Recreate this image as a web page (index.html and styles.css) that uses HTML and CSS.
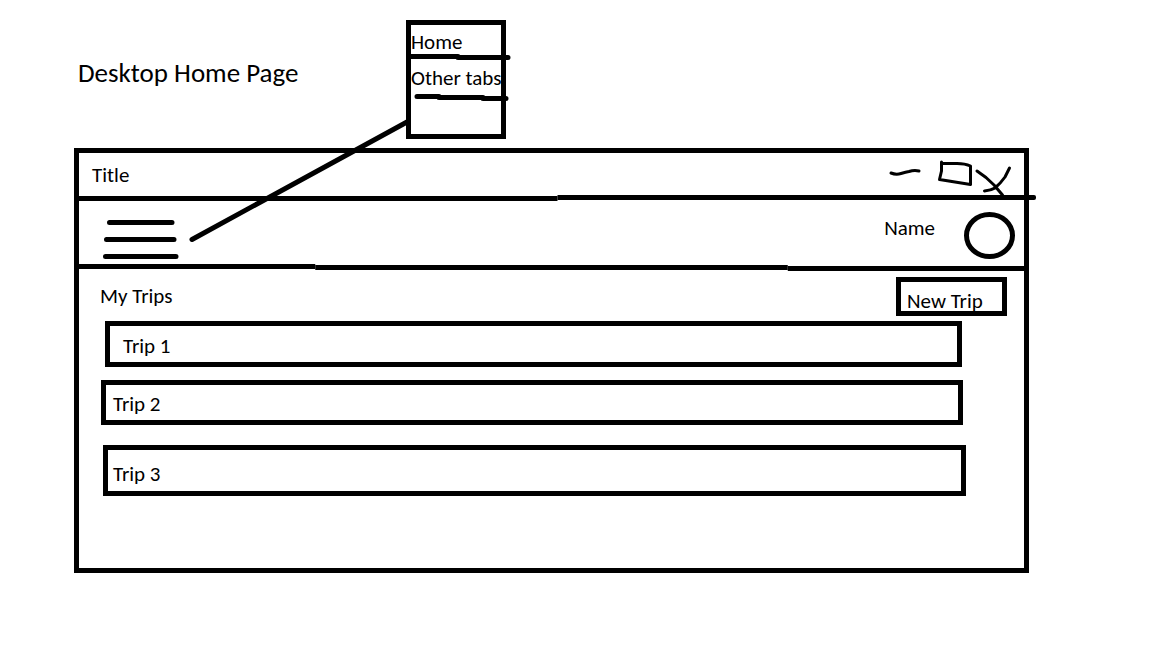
FILE: index.html
```html
<!DOCTYPE html>
<html lang="en">
<head>
<meta charset="utf-8">
<meta name="viewport" content="width=device-width, initial-scale=1">
<title>Desktop Home Page</title>
<link rel="stylesheet" href="styles.css">
</head>
<body>
<div class="page">
  <header class="page-header">
    <h1 class="page-title">Desktop Home Page</h1>
    <nav class="tab-menu" aria-label="Tabs">
      <a class="tab-link" href="#home">Home</a>
      <svg class="tab-rule" width="104" height="6" aria-hidden="true"><path d="M2 2.500H50M50 3.500H100"/></svg>
      <a class="tab-link tab-link-second" href="#tabs">Other tabs</a>
      <svg class="tab-rule tab-rule-last" width="96" height="8" aria-hidden="true"><path d="M3 2.500H25M25 3.500H69M69 4.500H92"/></svg>
      <svg class="connector" width="221" height="124" aria-hidden="true"><path d="M3 120.500 218 3"/></svg>
    </nav>
  </header>

  <div class="window">
    <div class="title-bar">
      <span class="window-title">Title</span>
      <div class="window-controls">
        <button class="icon-button" type="button" aria-label="Minimize">
          <svg width="48" height="42"><path d="M2 20Q7 22 12 20.500T20 18.500Q25 17 30 18"/></svg>
        </button>
        <button class="icon-button" type="button" aria-label="Maximize">
          <svg width="37" height="42"><path d="M4.500 9V18L2.500 26.500L18 29L33.500 31.500V13Q28 10.500 20 10.500H5"/></svg>
        </button>
        <button class="icon-button" type="button" aria-label="Close">
          <svg width="38" height="42"><path d="M3 18 12 24.500 20 32 28.500 42M35.500 15 31 24Q26 31 21 35Q17 37.500 10.500 38"/></svg>
        </button>
      </div>
    </div>
    <svg class="rule rule-title" aria-hidden="true">
      <rect x="0" y="1" width="50%" height="5"/>
      <rect x="50%" y="0" width="49%" height="5"/>
      <rect x="60%" y="0" width="40%" height="5" rx="2"/>
    </svg>

    <div class="toolbar">
      <button class="icon-button menu-button" type="button" aria-label="Menu">
        <svg width="76" height="41"><path d="M6.500 3.500H69M3.500 20.500H71M2.500 37.500H73"/></svg>
      </button>
      <div class="user">
        <span class="user-name">Name</span>
        <svg class="avatar" width="51" height="48" role="img" aria-label="Profile"><ellipse cx="25.500" cy="23.500" rx="23" ry="21"/></svg>
      </div>
    </div>
    <svg class="rule rule-toolbar" aria-hidden="true">
      <rect x="0" y="0" width="25%" height="5"/>
      <rect x="25%" y="1" width="50%" height="5"/>
      <rect x="75%" y="2" width="25%" height="5"/>
    </svg>

    <main class="content">
      <div class="content-header">
        <h2 class="content-title">My Trips</h2>
        <button class="new-trip" type="button">New Trip</button>
      </div>
      <ul class="trips">
        <li class="trip trip-first"><a class="trip-link" href="#trip-1">Trip 1</a></li>
        <li class="trip trip-second"><a class="trip-link" href="#trip-2">Trip 2</a></li>
        <li class="trip trip-third"><a class="trip-link" href="#trip-3">Trip 3</a></li>
      </ul>
    </main>
  </div>
</div>
</body>
</html>
```

FILE: styles.css
```css
* {
  box-sizing: border-box;
}

body {
  margin: 0;
  background: #fff;
  color: #000;
  font: 21px/24px Calibri, Carlito, Lato, sans-serif;
}

a {
  color: inherit;
  text-decoration: none;
}

button {
  font: inherit;
  color: inherit;
}

svg {
  display: block;
  overflow: visible;
}

path,
ellipse {
  fill: none;
  stroke: #000;
  stroke-width: 5px;
  stroke-linecap: round;
  stroke-linejoin: round;
}

.page {
  padding: 20px 123px 20px 74px;
}

.page-header {
  display: grid;
  grid-template-columns: 328px 100px;
  align-items: start;
  margin-left: 4px;
}

.page-title {
  margin: 37px 0 0;
  font-size: 27px;
  line-height: 32px;
  font-weight: 400;
  white-space: nowrap;
}

.tab-menu {
  position: relative;
  min-height: 119px;
  padding-top: 5px;
  border: 5px solid #000;
}

.tab-link {
  display: block;
  white-space: nowrap;
}

.tab-link-second {
  margin-top: 6px;
}

.tab-rule {
  margin-left: -3px;
}

.tab-rule-last {
  margin: 4px 0 0 3px;
}

.connector {
  position: absolute;
  left: -222px;
  top: 94px;
}

.window {
  margin-top: 9px;
  min-height: 425px;
  border: 5px solid #000;
}

.title-bar {
  display: flex;
  justify-content: space-between;
  padding: 0 12px 0 13px;
}

.window-title {
  padding-top: 10px;
}

.window-controls {
  display: flex;
}

.window-controls path {
  stroke-width: 3px;
}

.icon-button {
  padding: 0;
  border: 0;
  background: none;
}

.rule {
  width: 100%;
}

.rule-title {
  width: calc(100% + 12px);
  height: 6px;
}

.rule-toolbar {
  height: 7px;
}

.toolbar {
  display: flex;
  justify-content: space-between;
  align-items: flex-start;
  height: 63px;
  padding: 0 9px 0 24px;
}

.menu-button {
  margin-top: 18px;
}

.user {
  display: flex;
  align-items: flex-start;
  gap: 29px;
}

.user-name {
  padding-top: 15px;
}

.avatar {
  margin-top: 11px;
}

.content-header {
  display: flex;
  justify-content: space-between;
  align-items: flex-start;
  padding: 6px 17px 0 21px;
}

.content-title {
  margin: 7px 0 0;
  font-size: 21px;
  font-weight: 400;
}

.new-trip {
  min-width: 111px;
  padding: 9px 6px 0;
  border: 5px solid #000;
  background: #fff;
  line-height: 20px;
  text-align: left;
}

.trips {
  margin: 5px 0 0;
  padding: 0;
  list-style: none;
}

.trip {
  border: 5px solid #000;
}

.trip-link {
  display: block;
}

.trip-first {
  margin: 0 62px 13px 26px;
  padding: 8px 13px 4px;
}

.trip-second {
  margin: 0 61px 20px 22px;
  padding: 7px 7px 4px;
}

.trip-third {
  margin: 0 58px 0 24px;
  padding: 12px 5px 5px;
}
```
